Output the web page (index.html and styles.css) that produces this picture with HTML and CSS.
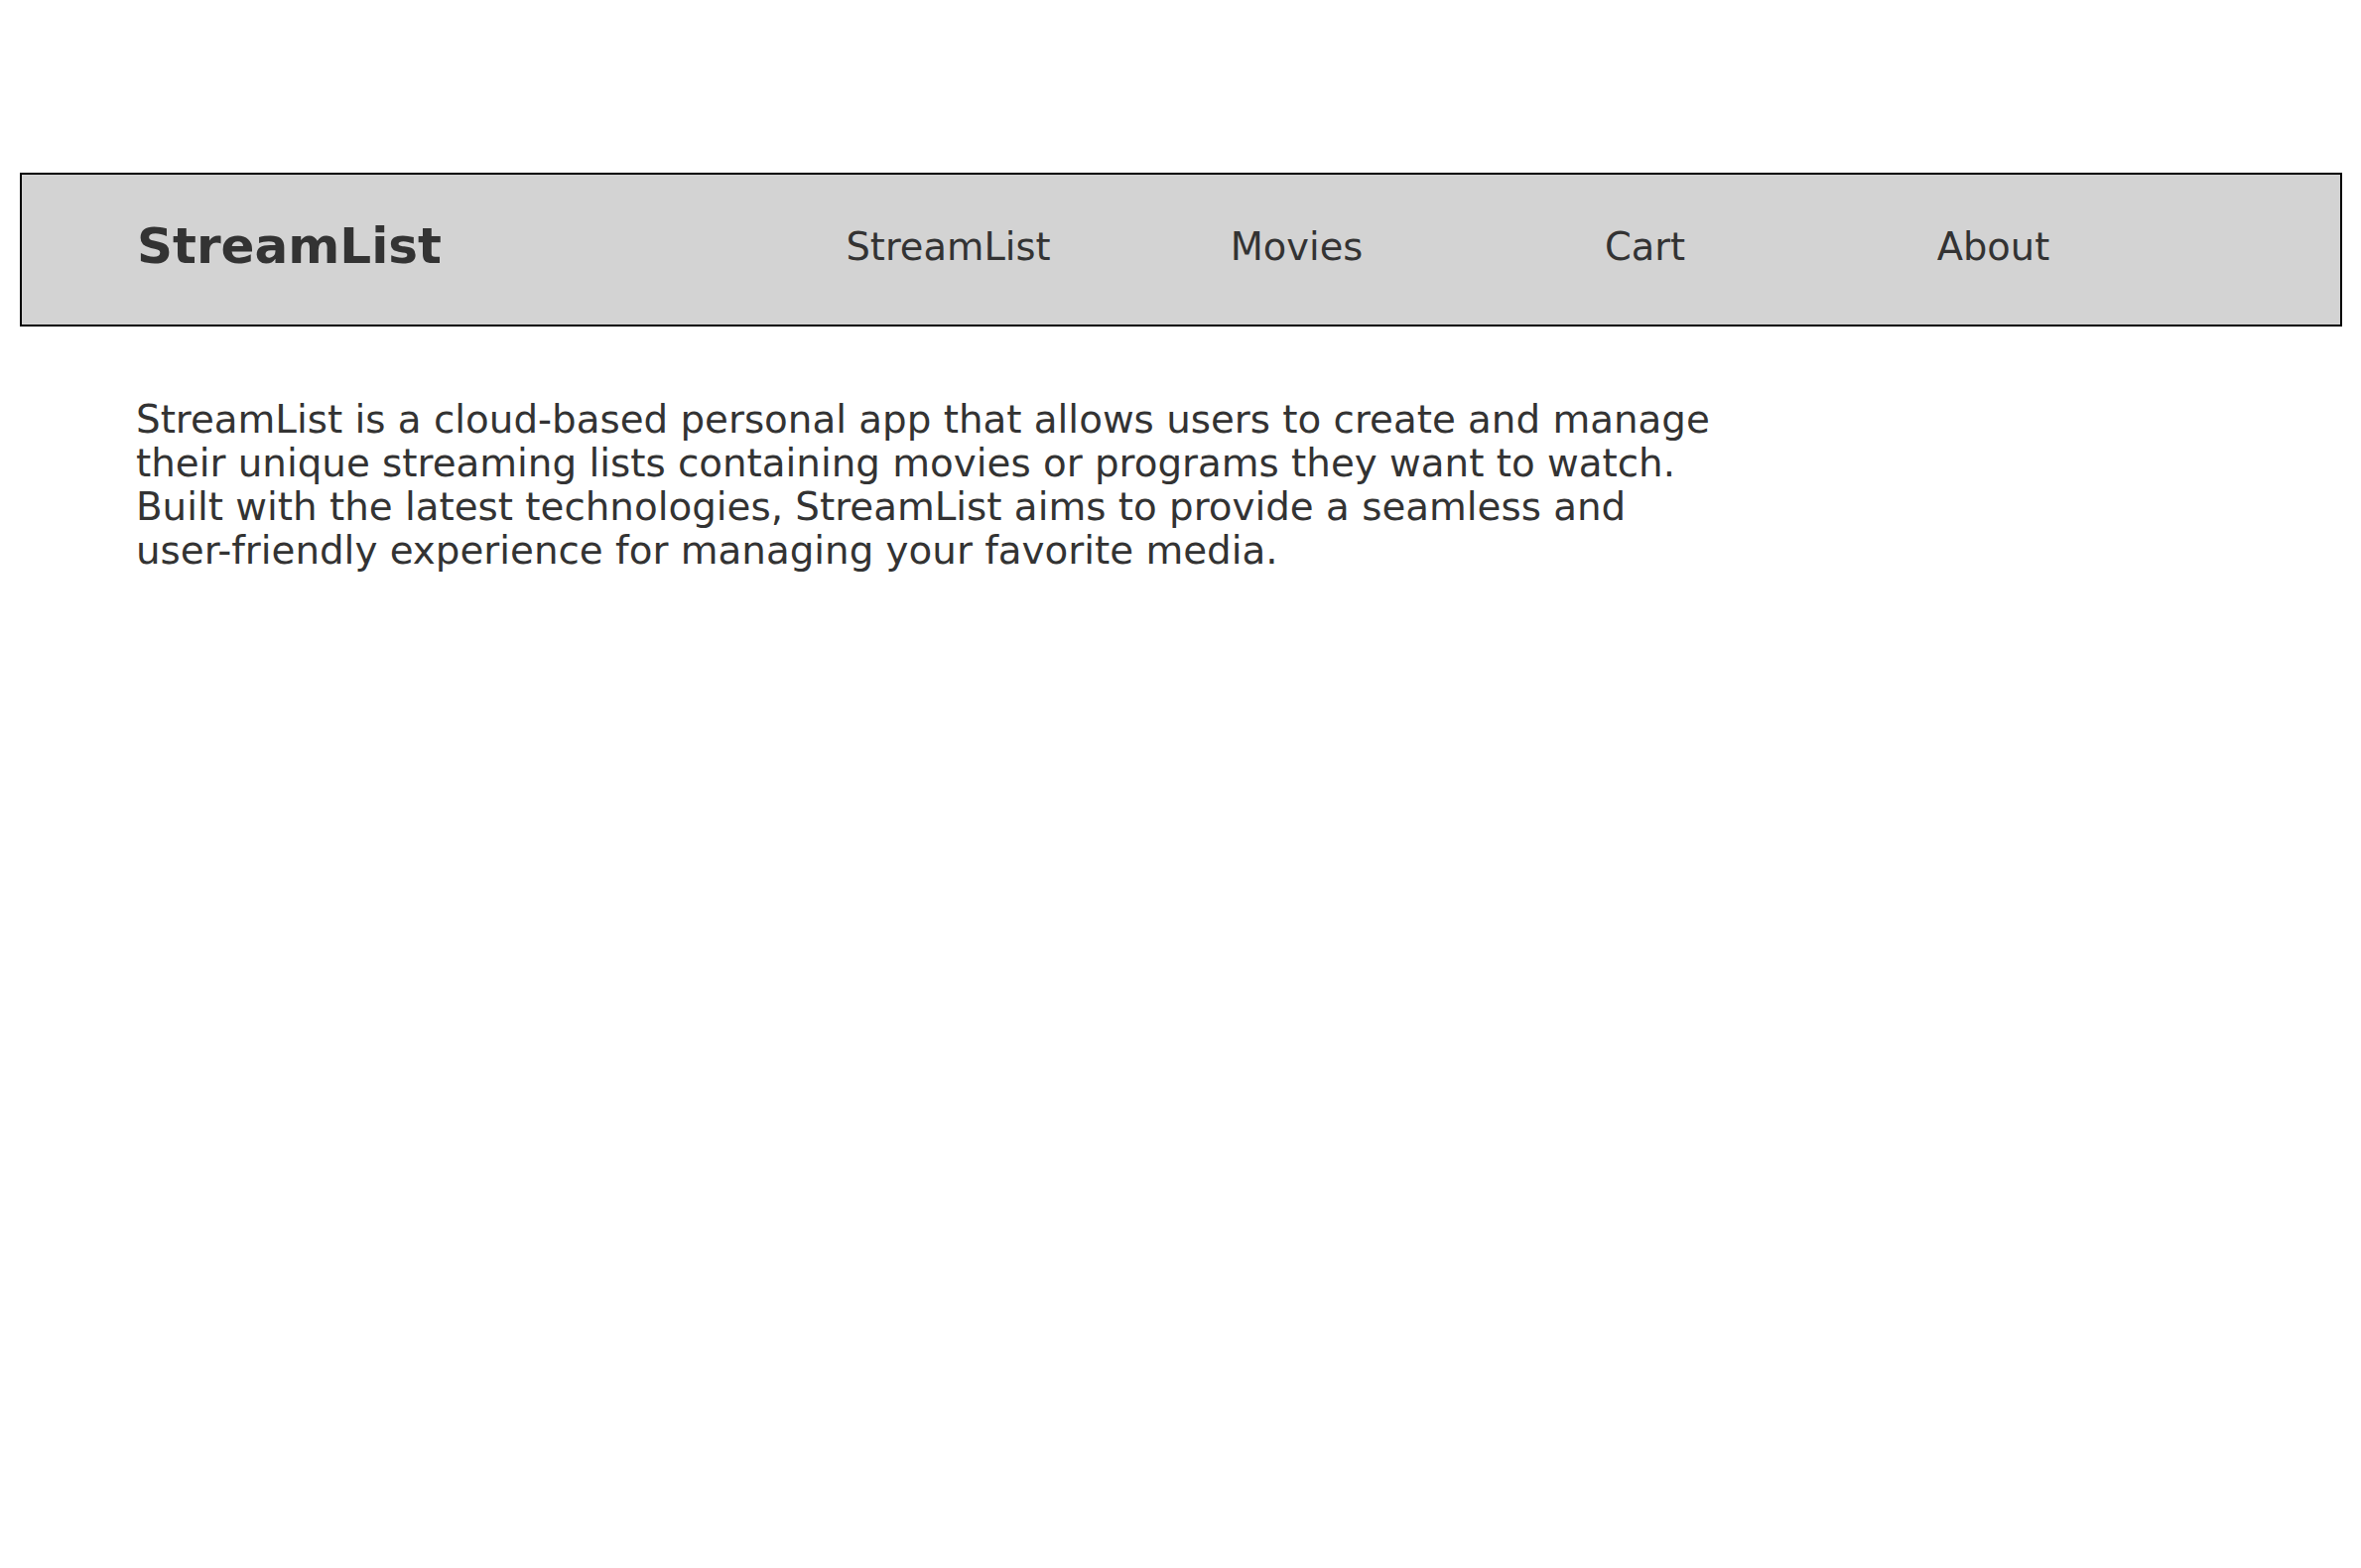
FILE: index.html
```html
<!DOCTYPE html>
<html lang="en">
<head>
<meta charset="utf-8">
<title>StreamList</title>
<link rel="stylesheet" href="styles.css">
</head>
<body>
<nav class="navbar">
  <div class="brand">StreamList</div>
  <ul class="nav-links">
    <li><a href="#">StreamList</a></li>
    <li><a href="#">Movies</a></li>
    <li><a href="#">Cart</a></li>
    <li><a href="#">About</a></li>
  </ul>
</nav>
<main class="content">
  <p class="intro">StreamList is a cloud-based personal app that allows users to create and manage their unique streaming lists containing movies or programs they want to watch. Built with the latest technologies, StreamList aims to provide a seamless and user-friendly experience for managing your favorite media.</p>
</main>
</body>
</html>
```
FILE: styles.css
```css
html, body {
  margin: 0;
  padding: 0;
  background: #ffffff;
}
body {
  font-family: "DejaVu Sans", sans-serif;
  color: #333333;
}
.navbar {
  box-sizing: border-box;
  margin: 174px 19px 0 20px;
  height: 155px;
  border: 2px solid #000000;
  background: #d3d3d3;
  display: flex;
  align-items: center;
  padding: 0 174px 7px 116px;
}
.brand {
  font-size: 50px;
  font-weight: bold;
  color: #333333;
}
.nav-links {
  list-style: none;
  margin: 0 0 0 auto;
  padding: 0;
  display: flex;
}
.nav-links li {
  width: 351px;
  text-align: center;
}
.nav-links a {
  font-size: 38.4px;
  color: #333333;
  text-decoration: none;
}
.content {
  padding: 72px 0 0 137px;
}
.intro {
  margin: 0;
  width: 1596px;
  font-size: 38.8px;
  line-height: 44px;
}
```
